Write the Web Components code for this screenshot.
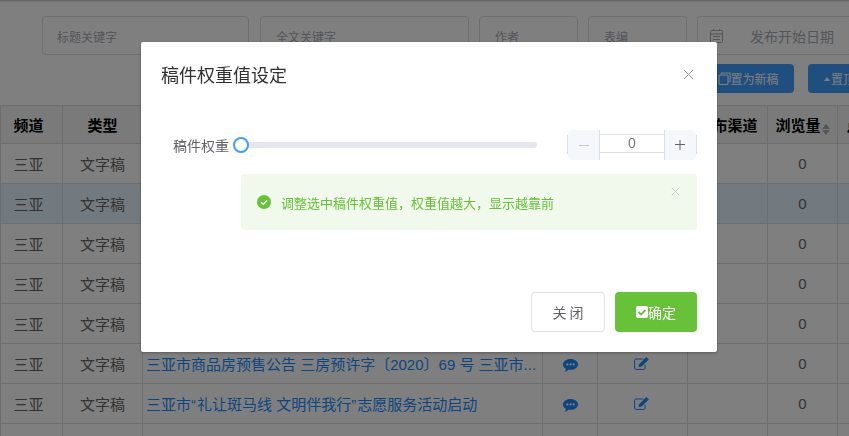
<!DOCTYPE html>
<html lang="zh-CN">
<head>
<meta charset="utf-8">
<title>稿件权重值设定</title>
<style>
html, body { margin: 0; height: 436px; overflow: hidden; background: #fff; }
body { font-family: "Noto Sans CJK SC", "Liberation Sans", sans-serif; }
</style>
</head>
<body>
<news-page>
  <filter-bar>
    <filter-input style="width:207px;padding-left:14px;margin-right:1px">标题关键字</filter-input>
    <filter-input style="width:209px">全文关键字</filter-input>
    <filter-input style="width:99px">作者</filter-input>
    <filter-input style="width:99px">表编</filter-input>
    <filter-input style="width:210px" date>发布开始日期</filter-input>
  </filter-bar>
  <tool-bar>
    <tool-button icon="copy" style="width:92px">置为新稿</tool-button>
    <tool-button icon="up" style="width:92px">置顶</tool-button>
  </tool-bar>
  <news-table></news-table>
</news-page>
<modal-layer>
  <weight-dialog heading="稿件权重值设定">
    <weight-field label="稿件权重"></weight-field>
    <notice-alert>调整选中稿件权重值，权重值越大，显示越靠前</notice-alert>
    <dialog-button slot="footer">关 闭</dialog-button>
    <dialog-button slot="footer" primary>确定</dialog-button>
  </weight-dialog>
</modal-layer>

<script>
const ICONS = {
    copy: '<svg width="13" height="13" viewBox="0 0 13 13" fill="none" stroke="currentColor" stroke-width="1.1"><path d="M3.5 2.5V1h8.5v8.5h-1.5"/><rect x="1" y="3" width="9" height="9.5" rx="1"/></svg>',
    up: '<svg width="6" height="4" viewBox="0 0 6 4" fill="currentColor"><path d="M3 0l3 4H0z"/></svg>',
    calendar: '<svg width="13" height="14" viewBox="0 0 13 14" fill="none" stroke="currentColor"><rect x=".5" y="1.5" width="12" height="12" rx="1"/><path d="M.5 5h12M3 7.5h7M3 10.5h7M3.500 0v2M9.500 0v2"/></svg>',
    comment: '<svg width="15" height="13" viewBox="0 0 15 13"><path fill="#1a8cff" d="M7.500 0C11.600 0 15 2.400 15 5.400s-3.400 5.400-7.500 5.400c-.6 0-1.200 0-1.800-.2C4.700 11.700 3.300 12.600 1.500 13c.7-.9 1.300-2 1.400-3.300C1.100 8.700 0 7.200 0 5.400 0 2.400 3.400 0 7.500 0z"/><g fill="#fff"><circle cx="4.300" cy="5.400" r="1.100"/><circle cx="7.500" cy="5.400" r="1.100"/><circle cx="10.700" cy="5.400" r="1.100"/></g></svg>',
    edit: '<svg width="15" height="13" viewBox="0 0 15 13"><path fill="none" stroke="#1a8cff" stroke-width="1" d="M9.500 2H2C1.200 2 .6 2.600 .6 3.400v7.800c0 .7.600 1.200 1.400 1.200h7.800c.7 0 1.200-.5 1.200-1.200V7.500"/><path fill="#1a8cff" d="M12.300 0l2.500 2.400L7.600 9.600l-3 .6.500-3z"/></svg>',
    checkCircle: '<svg width="14" height="14" viewBox="0 0 14 14"><circle cx="7" cy="7" r="7" fill="#67c23a"/><path d="M4 7.200l2.200 2.100L10 5.400" fill="none" stroke="#fff" stroke-width="1.500"/></svg>',
    checkSquare: '<svg width="12" height="12" viewBox="0 0 12 12"><rect width="12" height="12" rx="2" fill="#fff"/><path d="M2.500 6l2.500 2.500 4.500-4.500" fill="none" stroke="#67c23a" stroke-width="1.800"/></svg>',
    cross: '<svg viewBox="0 0 12 12" width="100%" height="100%" style="display:block" fill="none" stroke="currentColor" stroke-width="1"><path d="M1 1l10 10M11 1L1 11"/></svg>'
};

// small helper, every element here only needs static markup
function define(name, html) {
    customElements.define(name, class extends HTMLElement {
        constructor() {
            super();
            this.attachShadow({ mode: 'open' });
        }
        connectedCallback() {
            this.shadowRoot.innerHTML = typeof html === 'function' ? html(this) : html;
        }
    });
}

define('news-page', `
<style>
:host { display: block; width: 849px; height: 436px; overflow: hidden; }
</style>
<slot></slot>`);

define('filter-bar', `
<style>
:host { display: flex; gap: 10px; padding: 16px 0 0 42px; height: 39px; white-space: nowrap; }
</style>
<slot></slot>`);

define('filter-input', el => `
<style>
:host { display: flex; align-items: center; box-sizing: border-box; height: 39px; flex: none;
    border: 1px solid #dcdfe6; border-radius: 4px; color: #a8abb2; font-size: ${el.hasAttribute('date') ? 14 : 12}px;
    padding: 1px 0 0 ${el.hasAttribute('date') ? 12 : 15}px; }
.icon { display: flex; margin-right: 27px; color: #a8abb2; }
</style>
${el.hasAttribute('date') ? `<span class="icon">${ICONS.calendar}</span>` : ''}
<slot></slot>`);

define('tool-bar', `
<style>
:host { display: flex; gap: 14px; padding-left: 702px; margin-top: 9px; height: 29px; white-space: nowrap; }
</style>
<slot></slot>`);

define('tool-button', el => `
<style>
:host { display: flex; align-items: center; justify-content: center; flex: none; height: 29px; box-sizing: border-box;
    background: #409eff; color: #fff; border-radius: 4px; font-size: 12px; padding: 0 16px; }
:host([icon="up"]) { justify-content: flex-start; }
span { display: flex; flex: none; margin-right: ${el.getAttribute('icon') === 'up' ? 1 : 0}px; }
</style>
<span>${ICONS[el.getAttribute('icon')]}</span><slot></slot>`);

const TITLES = {
    5: '三亚市商品房预售公告 三房预许字〔2020〕69 号 三亚市...',
    6: '三亚市<q>“</q>礼让斑马线 文明伴我行<q>”</q>志愿服务活动启动'
};

define('news-table', () => {
    let rows = '';
    for (let i = 0; i < 7; i++) {
        rows += `<tr class="${i === 1 ? 'picked' : ''}">
            <td class="first">三亚</td><td>文字稿</td><td class="title">${TITLES[i] || ''}</td>
            <td class="talk">${ICONS.comment}</td><td class="pen">${ICONS.edit}</td><td></td><td>0</td><td></td></tr>`;
    }
    rows += '<tr><td></td><td></td><td></td><td></td><td></td><td></td><td></td><td></td></tr>';
    return `
<style>
:host { display: block; margin-top: 12px; }
table { border-collapse: collapse; table-layout: fixed; width: 900px; font: 15px "Liberation Sans", "Noto Sans CJK SC", sans-serif; color: #666; }
th, td { border: 1px solid #ddd; text-align: center; padding: 0; overflow: hidden; white-space: nowrap; }
th { height: 37px; background: #f5f5f5; color: #000; font-weight: 700; }
td { height: 39px; }
td svg { display: block; margin: 0 auto; }
tr.picked td { background: #e6f4ff; }
.first { padding-right: 6px; }
td.title { text-align: left; padding-left: 3px; color: #1a8cff; }
td.talk svg { margin-top: 3px; }
td.pen svg { margin-left: 36px; }
q { quotes: none; letter-spacing: 1px; }
.sort { display: inline-flex; flex-direction: column; gap: 1px; vertical-align: 2px; margin-left: 1px; }
.sort i { display: block; border: solid transparent; border-width: 0 4px 5px; border-bottom-color: #aaa; }
.sort i + i { border-width: 5px 4px 0; border-top-color: #aaa; border-bottom-color: transparent; }
</style>
<table>
<colgroup><col style="width:62px"><col style="width:80px"><col style="width:400px"><col style="width:55px"><col style="width:90px"><col style="width:80px"><col style="width:70px"><col style="width:63px"></colgroup>
<tr><th class="first">频道</th><th>类型</th><th></th><th></th><th></th><th>发布渠道</th><th>浏览量<span class="sort"><i></i><i></i></span></th><th>点击量</th></tr>
${rows}
</table>`;
});

define('modal-layer', `
<style>
:host { position: fixed; inset: 0; background: rgba(0,0,0,.5); box-shadow: inset 0 2px 2px -1px rgba(0,0,0,.25);
    display: block; padding: 42px 0 0 141px; box-sizing: border-box; }
</style>
<slot></slot>`);

define('weight-dialog', el => `
<style>
:host { display: flex; flex-direction: column; width: 576px; height: 310px; box-sizing: border-box; background: #fff;
    border-radius: 2px; box-shadow: 0 1px 3px rgba(0,0,0,.3); color: #303133; }
header { display: flex; justify-content: space-between; align-items: center; padding: 19px 23px 0 20px; height: 26px; }
h2 { margin: 0; font-size: 18px; font-weight: 400; line-height: 26px; color: #303133; }
.close { display: block; width: 11px; height: 11px; color: #909399; }
main { flex: 1; padding: 43px 20px 0; display: flex; flex-direction: column; gap: 14px; }
footer { display: flex; justify-content: flex-end; gap: 10px; padding: 0 20px 20px; }
</style>
<header><h2>${el.getAttribute('heading')}</h2><span class="close">${ICONS.cross}</span></header>
<main><slot></slot></main>
<footer><slot name="footer"></slot></footer>`);

define('weight-field', el => `
<style>
:host { display: flex; align-items: center; height: 30px; }
label { width: 68px; flex: none; padding-right: 12px; text-align: right; font-size: 14px; color: #606266; white-space: nowrap; }
</style>
<label>${el.getAttribute('label')}</label>
<weight-slider></weight-slider>
<number-stepper value="0"></number-stepper>`);

define('weight-slider', `
<style>
:host { display: block; position: relative; width: 296px; height: 6px; margin-right: 30px; flex: none;
    background: #e4e7ed; border-radius: 3px; }
/* thumb lies over the rail */
i { position: absolute; left: -8px; top: -5px; width: 16px; height: 16px; box-sizing: border-box;
    border: 2px solid #409eff; border-radius: 50%; background: #fff; }
</style>
<i></i>`);

define('number-stepper', el => `
<style>
:host { display: flex; width: 130px; height: 30px; flex: none; color: #777; font-size: 14px; position: relative; }
.btn { width: 32px; flex: none; display: flex; align-items: center; justify-content: center; background: #f5f7fa;
    border-radius: 4px 0 0 4px; box-shadow: inset -1px 0 0 #dcdfe6; margin-left: 1px; }
.btn.plus { border-radius: 0 4px 4px 0; box-shadow: inset 1px 0 0 #dcdfe6; margin: 0 1px 0 0; }
.btn svg { display: block; }
.val { flex: 1; height: 19px; margin-top: 4px; box-sizing: border-box; border: solid #dcdfe6; border-width: 1px 0;
    text-align: center; line-height: 17px; font-family: "Liberation Sans", sans-serif; }
/* short end marks left over from the inner input border */
:host::before, :host::after { content: ""; position: absolute; top: 5px; height: 19px; width: 1px; background: #dcdfe6; }
:host::before { left: 0; }
:host::after { right: 0; }
</style>
<span class="btn"><svg width="10" height="10" viewBox="0 0 10 10" stroke="#c0c4cc"><path d="M0 5.500h10"/></svg></span>
<span class="val">${el.getAttribute('value')}</span>
<span class="btn plus"><svg width="10" height="10" viewBox="0 0 10 10" stroke="#606266"><path d="M0 4.500h10M5 0v10"/></svg></span>`);

define('notice-alert', `
<style>
:host { display: flex; align-items: center; height: 56px; margin-left: 80px; padding: 0 16px; position: relative;
    background: #f0f9eb; border-radius: 4px; color: #67c23a; font-size: 13px; white-space: nowrap; box-sizing: border-box; }
.icon { display: flex; margin-right: 10px; }
/* close mark sits in the corner of the alert */
.close { position: absolute; top: 13px; right: 17px; width: 9px; height: 9px; color: #c0c4cc; }
</style>
<span class="icon">${ICONS.checkCircle}</span><slot></slot>
<span class="close">${ICONS.cross}</span>`);

define('dialog-button', el => `
<style>
:host { display: flex; align-items: center; justify-content: center; height: 40px; box-sizing: border-box; font-size: 14px;
    border-radius: 4px; white-space: nowrap; flex: none;
    ${el.hasAttribute('primary')
        ? 'width: 82px; background: #67c23a; color: #fff;'
        : 'width: 74px; border: 1px solid #dcdfe6; color: #606266;'} }
span { display: flex; }
</style>
${el.hasAttribute('primary') ? `<span>${ICONS.checkSquare}</span>` : ''}<slot></slot>`);
</script>
</body>
</html>
